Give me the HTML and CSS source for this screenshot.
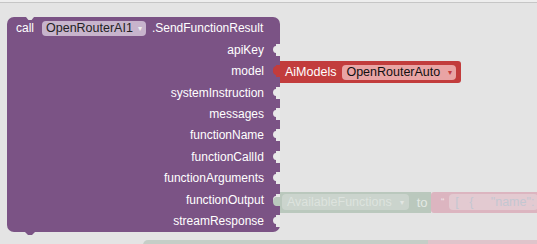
FILE: index.html
```html
<!DOCTYPE html>
<html lang="en">
<head>
  <meta charset="UTF-8" />
  <title>Blocks - SendFunctionResult</title>
  <link rel="stylesheet" href="styles.css">
</head>
<body>
  <div class="topbar"></div>

  <div class="workspace">
    <div class="block call">
      <div class="head">
        <span>call</span>
        <span class="field">OpenRouterAI1 <i>▾</i></span>
        <span>.SendFunctionResult</span>
      </div>

      <div class="row"><span>apiKey</span><svg class="socket" viewBox="0 0 8 14"><path d="M8 1H4V3C0 3 0 10 4 10V13H8Z"/></svg></div>

      <div class="row">
        <span>model</span><svg class="socket filled" viewBox="0 0 8 14"><path d="M8 1H4V3C0 3 0 10 4 10V13H8Z"/></svg>
        <div class="attached models">
          <svg class="plug" viewBox="0 0 8 22"><path d="M8 0V5H4C0 5 0 14 4 14H8V22Z"/></svg>
          <div class="models-body">
            <span>AiModels</span>
            <span class="field red">OpenRouterAuto <i>▾</i></span>
          </div>
        </div>
      </div>

      <div class="row"><span>systemInstruction</span><svg class="socket" viewBox="0 0 8 14"><path d="M8 1H4V3C0 3 0 10 4 10V13H8Z"/></svg></div>
      <div class="row"><span>messages</span><svg class="socket" viewBox="0 0 8 14"><path d="M8 1H4V3C0 3 0 10 4 10V13H8Z"/></svg></div>
      <div class="row"><span>functionName</span><svg class="socket" viewBox="0 0 8 14"><path d="M8 1H4V3C0 3 0 10 4 10V13H8Z"/></svg></div>
      <div class="row"><span>functionCallId</span><svg class="socket" viewBox="0 0 8 14"><path d="M8 1H4V3C0 3 0 10 4 10V13H8Z"/></svg></div>
      <div class="row"><span>functionArguments</span><svg class="socket" viewBox="0 0 8 14"><path d="M8 1H4V3C0 3 0 10 4 10V13H8Z"/></svg></div>

      <div class="row">
        <span>functionOutput</span><svg class="socket" viewBox="0 0 8 14"><path d="M8 1H4V3C0 3 0 10 4 10V13H8Z"/></svg>
        <div class="attached ghost">
          <svg class="plug pale-plug" viewBox="0 0 8 21"><path d="M8 0V5H4C0 5 0 14 4 14H8V21Z"/></svg>
          <div class="ghost-green">
            <span class="field pale">AvailableFunctions <i>▾</i></span>
            <span class="to">to</span>
          </div>
          <div class="ghost-pink">
            <span class="quote">“</span>
            <span class="field pink">[ &nbsp;&nbsp;{ &nbsp;&nbsp;&nbsp;&nbsp;"name":</span>
          </div>
        </div>
      </div>

      <div class="row"><span>streamResponse</span><svg class="socket" viewBox="0 0 8 14"><path d="M8 1H4V3C0 3 0 10 4 10V13H8Z"/></svg></div>
    </div>

    <div class="ghost-bottom">
      <div class="gb-green"></div>
      <div class="gb-pink"></div>
    </div>
  </div>
</body>
</html>
```

FILE: styles.css
```css
body { margin: 0; background: #e4e4e4; font-family: "Liberation Sans", Arial, sans-serif; font-size: 12px; overflow: hidden; height: 244px; }
.topbar { height: 2px; background: #eeeeee; border-bottom: 1px solid #c6c6c6; }
.workspace { padding: 14px 0 0 7px; }

.block { position: relative; width: 273px; background: #7b5385; border-radius: 7px; color: #fff; }
.block::before { content: ""; position: absolute; top: 0; left: 19px; width: 8px; height: 3px; background: #e4e4e4; clip-path: polygon(0 0, 100% 0, 70% 100%, 30% 100%); }
.block::after { content: ""; position: absolute; bottom: -3px; left: 18px; width: 10px; height: 3px; background: #7b5385; clip-path: polygon(0 0, 100% 0, 70% 100%, 30% 100%); }

.head { height: 22px; display: flex; align-items: center; gap: 6px; padding-left: 9px; }
.head span:first-child { margin-right: 2px; }

.field { display: inline-flex; align-items: center; white-space: nowrap; background: #c7b4cc; color: #222; border-radius: 4px; padding: 0 4px; height: 15px; font-size: 12.5px; }
.field i { font-style: normal; font-size: 8px; color: #eee; margin-left: 5px; }

.row { position: relative; height: 21.44px; display: flex; justify-content: flex-end; align-items: center; }
.row > span { margin-right: 8px; }
.socket { width: 8px; height: 14px; fill: #e9e9e9; display: block; }
.socket.filled { fill: #c23c3c; }

.attached { position: absolute; left: calc(100% - 8px); top: 50%; display: flex; align-items: center; white-space: nowrap; }

.models { transform: translateY(-10px); height: 22px; }
.plug { width: 8px; height: 22px; fill: #c23c3c; display: block; flex: none; }
.models-body { height: 22px; width: 181px; background: #c23c3c; border-radius: 0 3px 3px 0; display: flex; align-items: center; gap: 6px; padding-left: 5px; box-sizing: border-box; font-size: 12.5px; }
.field.red { background: #e9a4a4; color: #111; width: 114px; box-sizing: border-box; justify-content: space-between; }
.field.red i { color: #c23c3c; }

.ghost { transform: translateY(-8px); height: 21px; }
.pale-plug { height: 21px; fill: #bac8bd; }
.ghost-green { height: 21px; width: 151px; flex: none; background: #bac8bd; display: flex; align-items: center; padding-left: 2px; gap: 8px; box-sizing: border-box; }
.field.pale { background: #cbd4cd; color: #dde3de; font-size: 12.5px; height: 16px; padding: 0 5px; }
.field.pale i { color: #e2e6e3; margin-left: 8px; }
.to { color: #e3e8e4; font-size: 13px; }
.ghost-pink { height: 21px; width: 100px; flex: none; overflow: hidden; background: #dcb5c0; display: flex; align-items: center; gap: 5px; padding-left: 10px; border-radius: 3px 0 0 3px; }
.quote { color: #f1e3e7; font-size: 10px; }
.field.pink { background: #e3cad1; color: #c3c7d1; font-size: 12.5px; height: 16px; padding-left: 6px; }

.ghost-bottom { display: flex; margin: 8px 0 0 136px; height: 6px; }
.gb-green { width: 285px; background: #c5cec7; border-radius: 5px 0 0 0; }
.gb-pink { width: 109px; background: #dfc4cb; }
```
